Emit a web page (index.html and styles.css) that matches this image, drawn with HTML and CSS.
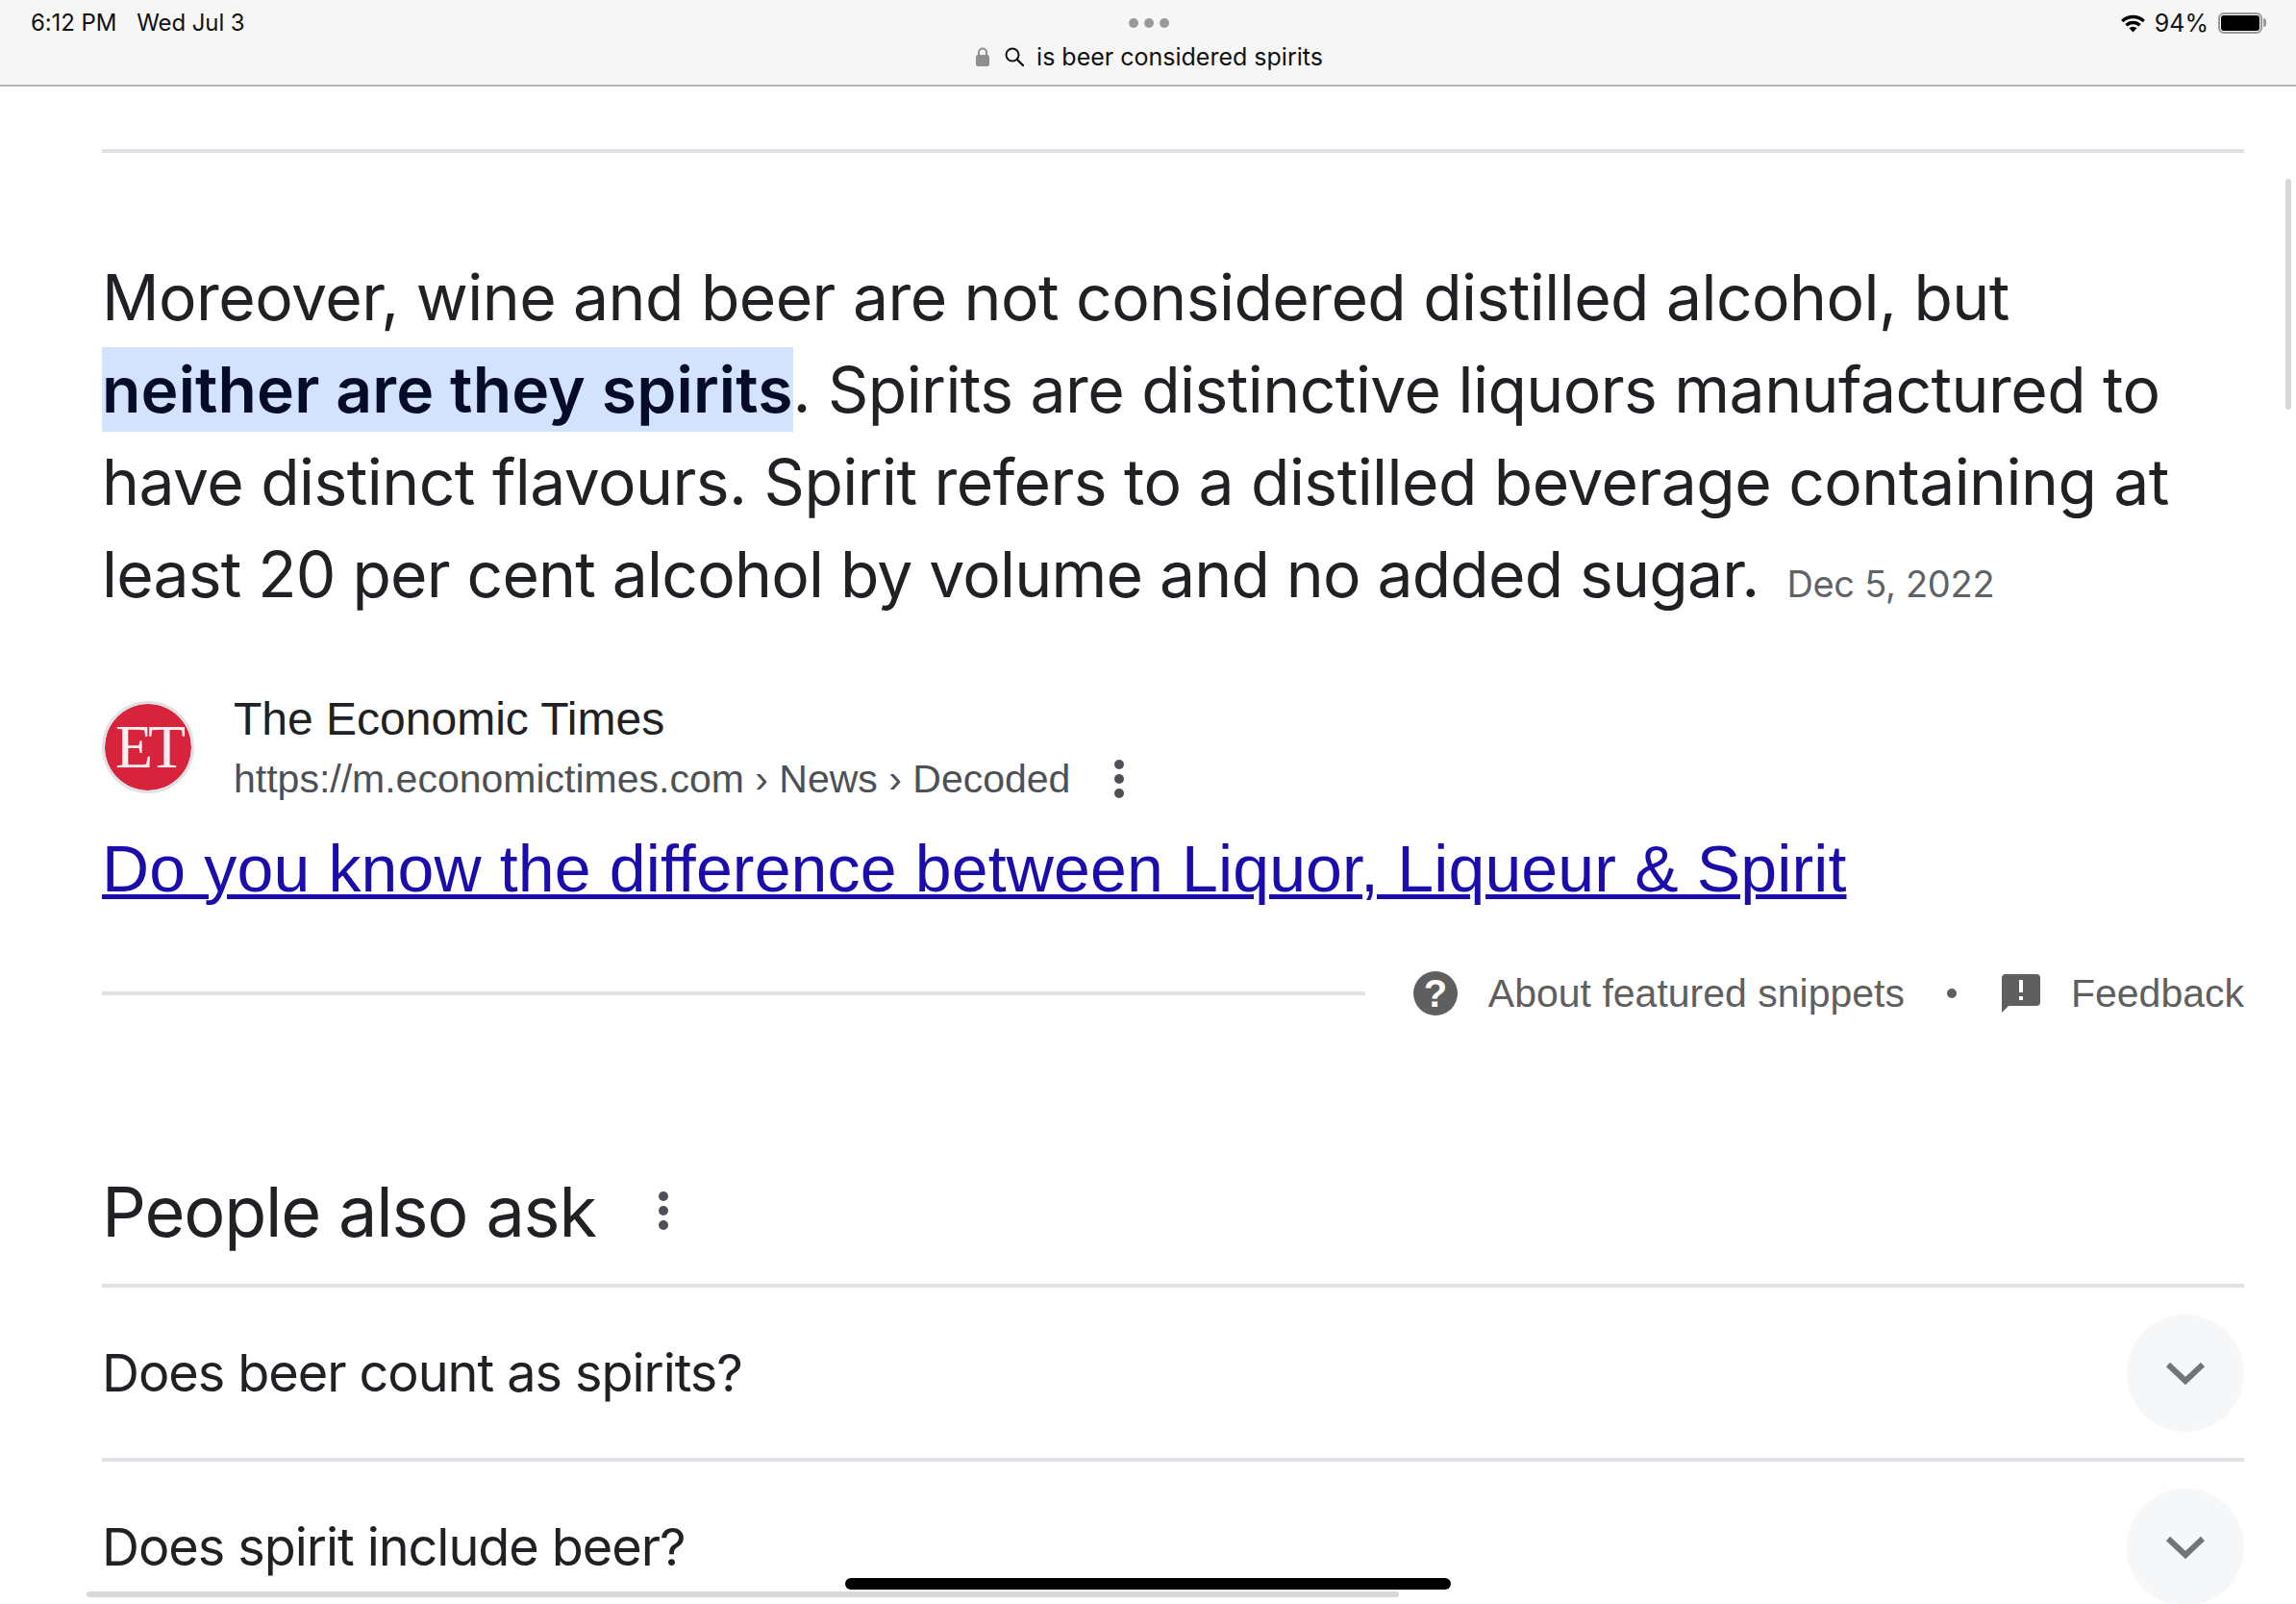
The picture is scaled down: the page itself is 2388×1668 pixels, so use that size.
FILE: index.html
```html
<!DOCTYPE html>
<html lang="en">
<head>
    <meta charset="UTF-8">
    <title>is beer considered spirits</title>
    <link rel="stylesheet" href="styles.css">
</head>
<body>

    <header class="topbar">
        <div class="clock"><span>6:12 PM</span><span>Wed Jul 3</span></div>
        <div class="address">
            <div class="dots"><i></i><i></i><i></i></div>
            <div class="query">
                <svg class="lock" width="14" height="20" viewBox="0 0 14 20"><path d="M3 9V5.5a4 4 0 0 1 8 0V9" fill="none" stroke="#8e8e93" stroke-width="2"/><rect x="0" y="8" width="14" height="12" rx="2.5" fill="#8e8e93"/></svg>
                <svg class="glass" width="20" height="20" viewBox="0 0 20 20"><circle cx="8" cy="8" r="6.5" fill="none" stroke="#111" stroke-width="2"/><path d="M13 13L19 19" stroke="#111" stroke-width="2.4" stroke-linecap="round"/></svg>
                <span>is beer considered spirits</span>
            </div>
        </div>
        <div class="status">
            <svg width="27" height="20" viewBox="0 0 28 21"><path d="M1 7.2A18.5 18.5 0 0 1 27 7.2L24.6 9.8A15 15 0 0 0 3.4 9.8Z M5.3 11.6A12.5 12.5 0 0 1 22.7 11.6L20.2 14.2A9 9 0 0 0 7.8 14.2Z M9.8 16.1A6.2 6.2 0 0 1 18.2 16.1L14 20.5Z" fill="#000"/></svg>
            <span>94%</span>
            <div class="battery"><div class="battery-fill"></div></div>
            <div class="battery-tip"></div>
        </div>
    </header>

    <main class="page">
        <hr class="rule">

        <p class="snippet">Moreover, wine and beer are not considered distilled alcohol, but<br><mark>neither are they spirits</mark>. Spirits are distinctive liquors manufactured to<br>have distinct flavours. Spirit refers to a distilled beverage containing at<br><span class="tight">least 20 per cent alcohol by volume and no added sugar.</span> <span class="date">Dec 5, 2022</span></p>

        <div class="source">
            <div class="favicon"><span>ET</span></div>
            <div class="source-text">
                <div class="source-name">The Economic Times</div>
                <div class="source-url">
                    <span>https://m.economictimes.com › News › Decoded</span>
                    <div class="kebab"><i></i><i></i><i></i></div>
                </div>
            </div>
        </div>

        <a class="result-link" href="#">Do you know the difference between Liquor, Liqueur &amp; Spirit</a>

        <div class="about">
            <hr class="rule about-rule">
            <svg class="about-icon" width="46" height="46" viewBox="0 0 46 46"><circle cx="23" cy="23" r="23" fill="#5f5f5f"/><text x="23" y="37" text-anchor="middle" class="icon-mark">?</text></svg>
            <span class="about-label">About featured snippets</span>
            <i class="about-dot"></i>
            <svg class="feedback-icon" width="40" height="40" viewBox="0 0 40 40"><path d="M4 0H36a4 4 0 0 1 4 4V29a4 4 0 0 1-4 4H7L0 40V4a4 4 0 0 1 4-4Z" fill="#5f5f5f"/><rect x="18" y="6" width="4" height="13" fill="#fff"/><rect x="18" y="23" width="4" height="4" fill="#fff"/></svg>
            <span class="about-label">Feedback</span>
        </div>

        <div class="paa-head">
            <h2>People also ask</h2>
            <div class="kebab"><i></i><i></i><i></i></div>
        </div>

        <div class="question">
            <span>Does beer count as spirits?</span>
            <div class="expand"><svg width="42" height="26" viewBox="0 0 42 26"><path d="M3 4L21 21L39 4" fill="none" stroke="#70757a" stroke-width="6"/></svg></div>
        </div>
        <div class="question">
            <span>Does spirit include beer?</span>
            <div class="expand"><svg width="42" height="26" viewBox="0 0 42 26"><path d="M3 4L21 21L39 4" fill="none" stroke="#70757a" stroke-width="6"/></svg></div>
        </div>
    </main>

    <div class="scroll-v"></div>
    <div class="scroll-h"></div>
    <div class="home-bar"></div>

</body>
</html>
```

FILE: styles.css
```css
html, body {
    margin: 0;
    height: 1668px;
    overflow: hidden;
    background-color: #ffffff;
}

body {
    font-family: "Liberation Sans", Arial, sans-serif;
    color: #202124;
    position: relative;
}

/* ipad status + address bar */
.topbar {
    height: 88px;
    display: grid;
    grid-template-columns: 1fr auto 1fr;
    background-color: #f6f6f6;
    border-bottom: 2px solid #b4b4b4;
    font-family: Inter, sans-serif;
    font-size: 25px;
    color: #111111;
}

.clock {
    display: flex;
    gap: 21px;
    padding: 9px 0 0 32px;
    font-size: 24px;
    letter-spacing: -0.1px;
}

.address {
    display: flex;
    flex-direction: column;
    align-items: center;
    padding: 19px 0 0 3px;
}

.dots {
    display: flex;
    gap: 6px;
    height: 10px;
}

.dots i {
    width: 10px;
    height: 10px;
    border-radius: 50%;
    background-color: #999999;
}

.query {
    display: flex;
    align-items: center;
    margin-top: 15px;
}

.lock { margin-right: 16px; }
.glass { margin-right: 13px; }

.status {
    display: flex;
    justify-content: flex-end;
    align-items: flex-start;
    padding: 9px 31px 0 0;
}

.status svg { margin: 5px 9px 0 0; }

.battery {
    box-sizing: border-box;
    width: 46px;
    height: 22px;
    margin: 4px 0 0 10px;
    padding: 1px;
    border: 2px solid #999999;
    border-radius: 6px;
}

.battery-fill {
    height: 100%;
    background-color: #000000;
    border-radius: 3px;
}

.battery-tip {
    width: 3px;
    height: 9px;
    margin: 10px 0 0 1px;
    background-color: #999999;
    border-radius: 0 3px 3px 0;
}

/* page */
.page {
    padding: 65px 54px 0 106px;
}

.rule {
    height: 4px;
    margin: 0;
    border: none;
    background-color: #e0e2e6;
}

.snippet {
    margin: 102px 0 0;
    font-family: Inter, sans-serif;
    font-size: 66px;
    line-height: 96px;
    letter-spacing: -0.55px;
    white-space: nowrap;
    color: #202124;
}

mark {
    padding: 4px 0;
    background-color: #d3e3fd;
    color: #040c28;
    font-weight: 600;
    letter-spacing: 0.12px;
}

.tight {
    letter-spacing: -0.8px;
}

.date {
    font-size: 38px;
    letter-spacing: -0.3px;
    color: #5f6368;
    margin-left: 11px;
}

.source {
    display: flex;
    gap: 41px;
    margin-top: 74px;
}

.favicon {
    width: 90px;
    height: 90px;
    border: 3px solid #dfe1e5;
    border-radius: 50%;
    background-color: #d7233c;
    background-clip: padding-box;
    display: flex;
    align-items: center;
    justify-content: center;
    font-family: "Liberation Serif", serif;
    font-size: 64px;
    color: #fdeef0;
    letter-spacing: -5px;
}

.source-name {
    font-size: 48px;
    line-height: 60px;
    margin-top: -11px;
}

.source-url {
    display: flex;
    align-items: center;
    gap: 46px;
    font-size: 41px;
    line-height: 60px;
    margin-top: 2px;
    color: #4d5156;
}

.kebab {
    display: flex;
    flex-direction: column;
    gap: 5px;
}

.kebab i {
    width: 10px;
    height: 10px;
    border-radius: 50%;
    background-color: #4d5156;
}

.result-link {
    display: block;
    margin-top: 18px;
    font-size: 68px;
    letter-spacing: 0.15px;
    line-height: 90px;
    color: #1a0dab;
    text-decoration-thickness: 5px;
}

.about {
    display: flex;
    align-items: center;
    margin-top: 62px;
    height: 46px;
}

.about-rule {
    flex: 1;
    margin-right: 50px;
}

.about-label {
    font-size: 41px;
    color: #5f5f5f;
}

.about-icon { margin-right: 32px; }
.icon-mark {
    font-family: "Liberation Sans", sans-serif;
    font-size: 40px;
    font-weight: bold;
    fill: #ffffff;
}

.about-dot {
    width: 10px;
    height: 10px;
    margin: 0 47px 0 44px;
    border-radius: 50%;
    background-color: #5f5f5f;
}

.feedback-icon { margin-right: 32px; }

.paa-head {
    display: flex;
    align-items: center;
    gap: 65px;
    height: 100px;
    margin-top: 153px;
    padding-bottom: 26px;
    border-bottom: 4px solid #e0e2e6;
}

.paa-head h2 {
    margin: 0;
    font-family: Inter, sans-serif;
    font-size: 72px;
    font-weight: 400;
    letter-spacing: -1.2px;
}

.question {
    display: flex;
    justify-content: space-between;
    align-items: center;
    height: 177px;
    border-bottom: 4px solid #e0e2e6;
    font-family: Inter, sans-serif;
    font-size: 54px;
    letter-spacing: -1.05px;
}

.expand {
    width: 122px;
    height: 122px;
    border-radius: 50%;
    background-color: #f6f7f9;
    display: flex;
    align-items: center;
    justify-content: center;
}

/* overlays from the browser chrome */
.scroll-v {
    position: absolute;
    left: 2377px;
    top: 186px;
    width: 6px;
    height: 240px;
    border-radius: 3px;
    background-color: #d8d8d8;
}

.scroll-h {
    position: absolute;
    left: 90px;
    top: 1655px;
    width: 1365px;
    height: 6px;
    border-radius: 3px;
    background-color: #d8d8d8;
}

.home-bar {
    position: absolute;
    left: 879px;
    top: 1641px;
    width: 630px;
    height: 12px;
    border-radius: 6px;
    background-color: #000000;
}
```
